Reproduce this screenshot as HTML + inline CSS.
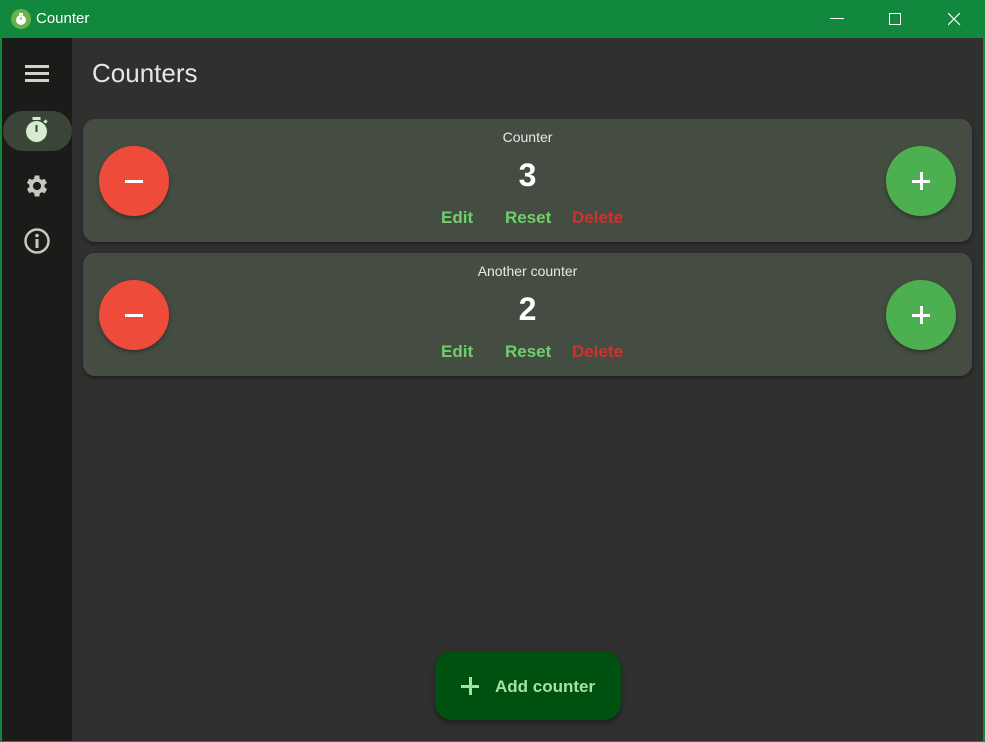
<!DOCTYPE html>
<html><head><style>
*{margin:0;padding:0;box-sizing:border-box}
body{width:985px;height:742px;background:#0f883c;font-family:"Segoe UI","Liberation Sans",sans-serif;position:relative;overflow:hidden}
.title{position:absolute;left:0;top:0;width:985px;height:38px;background:#11883e;color:#fff}
.title .t{position:absolute;left:36px;top:10px;font-size:15px}
.side{position:absolute;left:2px;top:38px;width:70px;height:703px;background:#1b1c1a}
.main{position:absolute;left:72px;top:38px;width:911px;height:703px;background:#303030}
h1{position:absolute;left:92px;top:58px;font-size:26px;font-weight:400;color:#e6e6e6}
.card{position:absolute;left:83px;width:889px;height:123px;background:#454d42;border-radius:12px;box-shadow:0 2px 4px rgba(0,0,0,.4)}
.circ{position:absolute;top:27px;width:70px;height:70px;border-radius:50%;box-shadow:0 2px 4px rgba(0,0,0,.35)}
.minus{left:16px;background:#ef4b3a}
.plus{left:803px;background:#4caf50}
.name{position:absolute;left:0;width:100%;top:10px;text-align:center;color:#e8e8e8;font-size:14px}
.num{position:absolute;left:0;width:100%;top:38px;text-align:center;color:#fff;font-size:32px;font-weight:700}
.act{position:absolute;top:89px;font-size:17px;font-weight:600}
</style></head><body>
<div class="title">
<svg style="position:absolute;left:11px;top:9px" width="20" height="20"><circle cx="10" cy="10" r="10" fill="#6ab04c"/><circle cx="10" cy="11" r="5" fill="#fff"/><rect x="8" y="4" width="4" height="2" fill="#fff"/><rect x="9.4" y="8" width="1.2" height="3" fill="#6ab04c"/></svg>
<span class="t">Counter</span>
<svg style="position:absolute;left:830px;top:18px" width="14" height="2"><rect width="14" height="1" fill="#fff"/></svg>
<svg style="position:absolute;left:889px;top:13px" width="13" height="13"><rect x=".5" y=".5" width="11" height="11" fill="none" stroke="#fff"/></svg>
<svg style="position:absolute;left:948px;top:13px" width="13" height="13"><path d="M0 0L12 12M12 0L0 12" stroke="#fff" stroke-width="1.2"/></svg>
</div>
<div class="side">
<svg style="position:absolute;left:23px;top:27px" width="25" height="18"><rect y="0" width="24" height="3" fill="#cdd3c8"/><rect y="7" width="24" height="3" fill="#cdd3c8"/><rect y="14" width="24" height="3" fill="#cdd3c8"/></svg>
<div style="position:absolute;left:1px;top:73px;width:69px;height:40px;border-radius:20px;background:#3a4537"></div>
<svg style="position:absolute;left:22px;top:79px" width="26" height="26"><rect x="8.5" y="0" width="8" height="3" fill="#d5ecd0"/><circle cx="12.5" cy="14.5" r="10.5" fill="#d5ecd0"/><rect x="11.5" y="8" width="2" height="7" fill="#3a4537"/><rect x="20" y="3" width="3" height="3" fill="#d5ecd0" transform="rotate(45 21.5 4.5)"/></svg>
<svg style="position:absolute;left:21px;top:134px" width="28" height="28" viewBox="0 0 24 24"><path fill="#c4c9c0" d="M19.4 13a7.5 7.5 0 000-2l2.1-1.6-2-3.5-2.5 1a7 7 0 00-1.7-1L15 3h-4l-.4 2.7a7 7 0 00-1.7 1l-2.5-1-2 3.5L6.5 11a7.5 7.5 0 000 2l-2.1 1.6 2 3.5 2.5-1a7 7 0 001.7 1L11 21h4l.4-2.7a7 7 0 001.7-1l2.5 1 2-3.5zM13 15.5a3.5 3.5 0 110-7 3.5 3.5 0 010 7z" transform="translate(-1 0)"/></svg>
<svg style="position:absolute;left:21px;top:189px" width="28" height="28"><circle cx="14" cy="14" r="11.5" fill="none" stroke="#c4c9c0" stroke-width="2.5"/><rect x="12.5" y="12" width="3" height="9" fill="#c4c9c0"/><circle cx="14" cy="8.5" r="1.8" fill="#c4c9c0"/></svg>
</div>
<div class="main"></div>
<h1>Counters</h1>
<div class="card" style="top:119px">
<div class="circ minus"><div style="position:absolute;left:26px;top:34px;width:18px;height:3px;background:#fff"></div></div>
<div class="circ plus"><div style="position:absolute;left:26px;top:34px;width:18px;height:2.5px;background:#fff"></div><div style="position:absolute;left:34px;top:26px;width:2.5px;height:18px;background:#fff"></div></div>
<div class="name">Counter</div><div class="num">3</div>
<span class="act" style="left:358px;color:#6fcf6a">Edit</span><span class="act" style="left:422px;color:#6fcf6a">Reset</span><span class="act" style="left:489px;color:#d32f2f">Delete</span>
</div>
<div class="card" style="top:253px">
<div class="circ minus"><div style="position:absolute;left:26px;top:34px;width:18px;height:3px;background:#fff"></div></div>
<div class="circ plus"><div style="position:absolute;left:26px;top:34px;width:18px;height:2.5px;background:#fff"></div><div style="position:absolute;left:34px;top:26px;width:2.5px;height:18px;background:#fff"></div></div>
<div class="name">Another counter</div><div class="num">2</div>
<span class="act" style="left:358px;color:#6fcf6a">Edit</span><span class="act" style="left:422px;color:#6fcf6a">Reset</span><span class="act" style="left:489px;color:#d32f2f">Delete</span>
</div>
<div style="position:absolute;left:435px;top:651px;width:186px;height:69px;border-radius:17px;background:#00510f;box-shadow:0 3px 6px rgba(0,0,0,.4);color:#a5e3a0">
<div style="position:absolute;left:26px;top:34px;width:18px;height:2.5px;background:#a5e3a0"></div><div style="position:absolute;left:34px;top:26px;width:2.5px;height:18px;background:#a5e3a0"></div>
<span style="position:absolute;left:60px;top:26px;font-size:17px;font-weight:600">Add counter</span></div>
</body></html>
